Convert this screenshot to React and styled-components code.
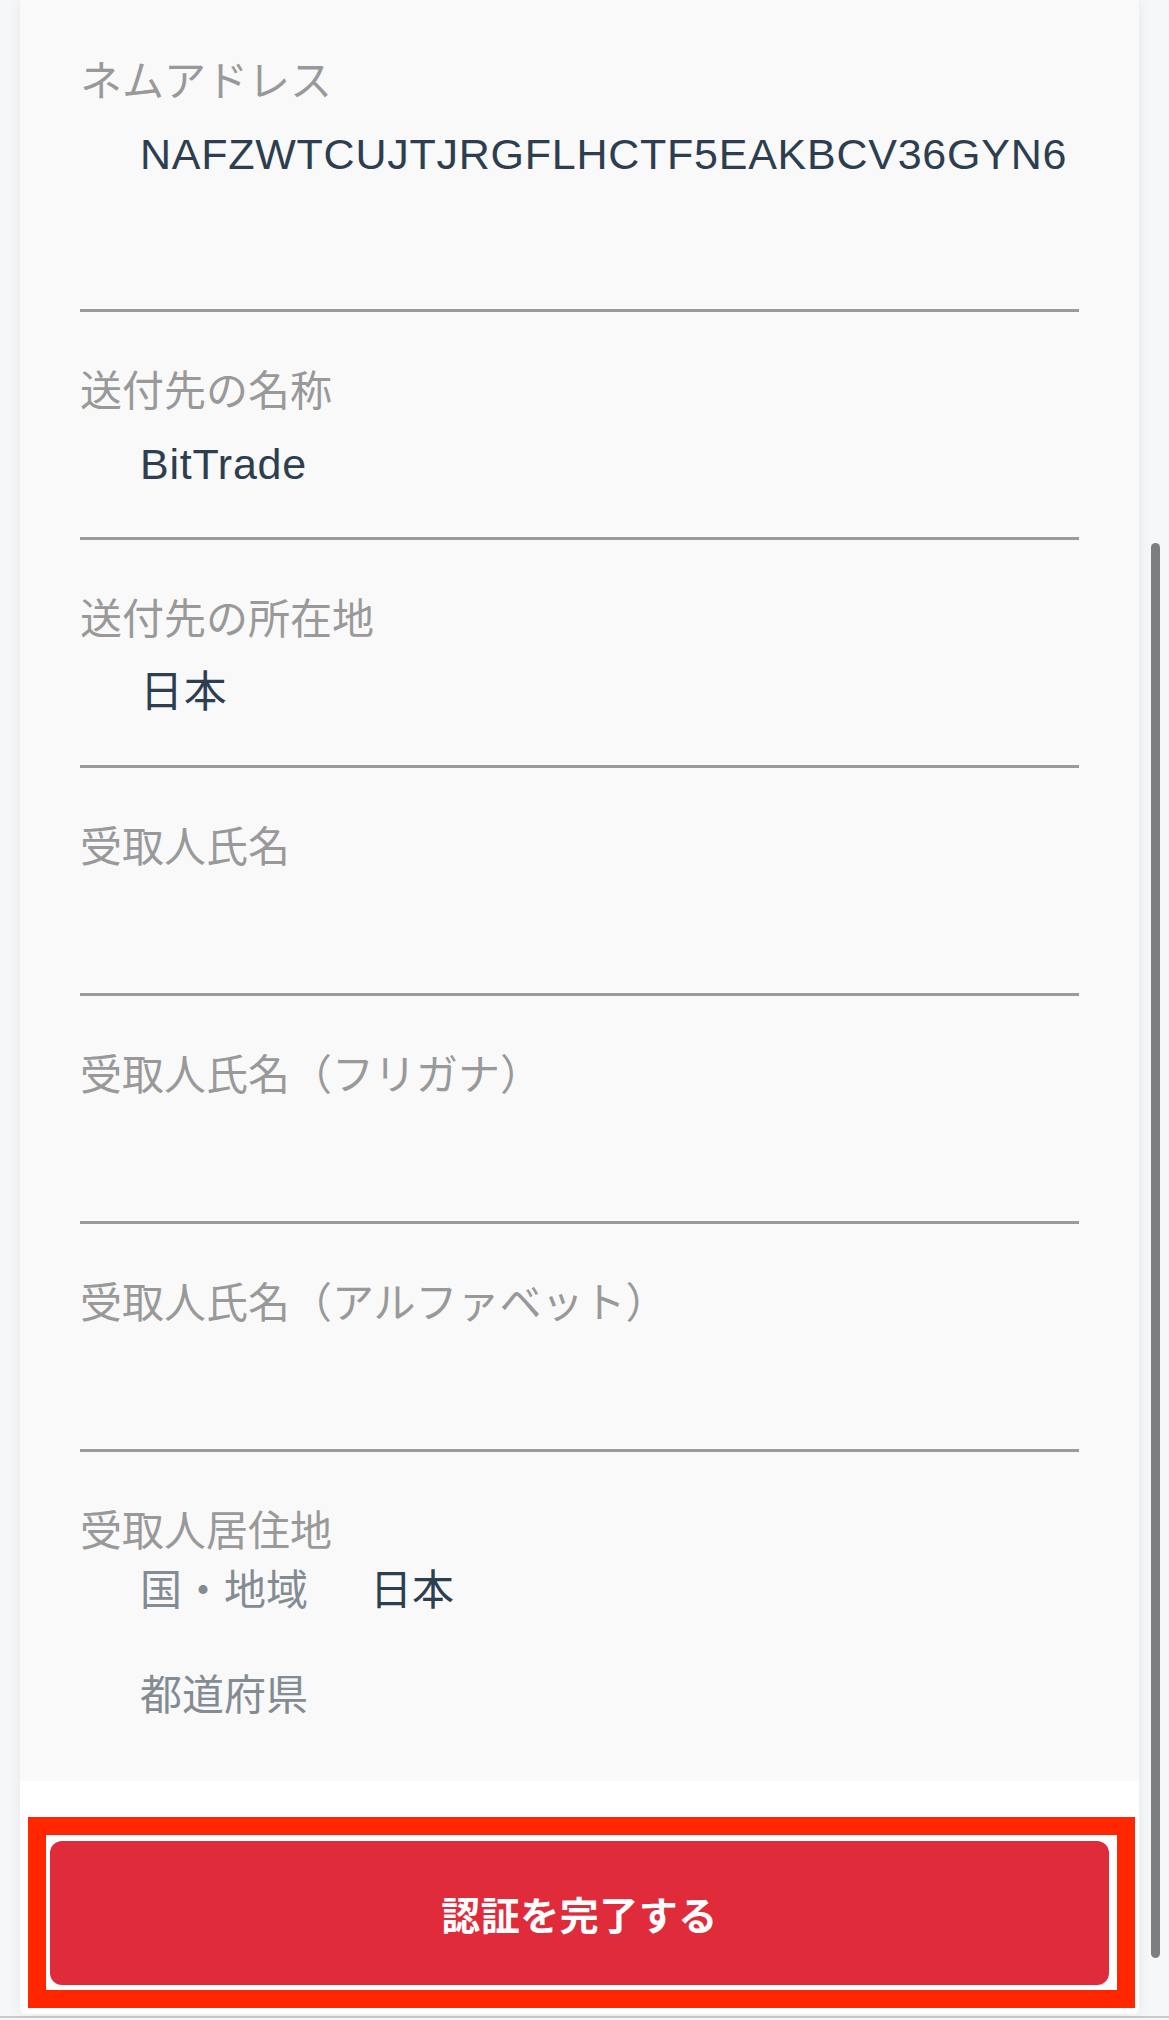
import React from "react";
import styled, { createGlobalStyle } from "styled-components";

const GlobalStyle = createGlobalStyle`
  html, body {
    margin: 0;
    padding: 0;
    background: #f6f7f9;
  }
  body {
    font-family: "Liberation Sans", "Noto Sans CJK JP", sans-serif;
    -webkit-font-smoothing: antialiased;
  }
`;

//form rows
const fields = [
  { label: "ネムアドレス", value: "NAFZWTCUJTJRGFLHCTF5EAKBCV36GYN6", tall: true },
  { label: "送付先の名称", value: "BitTrade" },
  { label: "送付先の所在地", value: "日本" },
  { label: "受取人氏名", value: "" },
  { label: "受取人氏名（フリガナ）", value: "" },
  { label: "受取人氏名（アルファベット）", value: "" },
];

const residence = [
  { name: "国・地域", value: "日本" },
  { name: "都道府県", value: "" },
];

const App = () => {
  return (
    <Page>
      <GlobalStyle />
      <Card>
        <FormArea>
          {fields.map((f, i) => (
            <Section key={f.label} first={i === 0}>
              <Label>{f.label}</Label>
              <Value tall={f.tall}>{f.value}</Value>
            </Section>
          ))}
          <Section last>
            <Label>受取人居住地</Label>
            <SubList>
              {residence.map((r) => (
                <SubRow key={r.name}>
                  <SubName>{r.name}</SubName>
                  <SubValue>{r.value}</SubValue>
                </SubRow>
              ))}
            </SubList>
          </Section>
        </FormArea>
        <Highlight>
          <SubmitButton type="button">認証を完了する</SubmitButton>
        </Highlight>
      </Card>
      <ScrollThumb />
    </Page>
  );
};

const Page = styled.div`
  position: relative;
  padding: 0 30px 0 20px;
  border-bottom: 2px solid #c9cacd;
  min-height: 2018px;
  box-sizing: border-box;
`;

const Card = styled.div`
  background: #ffffff;
  border-radius: 0 0 6px 6px;
  box-shadow: 0 0 14px rgba(0, 0, 0, 0.07);
  display: flex;
  flex-direction: column;
  padding-bottom: 6px;
`;

const FormArea = styled.div`
  background: #f9f9f9;
  padding: 0 60px 68px;
`;

const Section = styled.div`
  padding: ${(p) => (p.first ? "46px" : "44px")} 0 ${(p) => (p.last ? "0" : "41px")};
  border-bottom: ${(p) => (p.last ? "none" : "3px solid #9a9a9a")};
`;

const Label = styled.div`
  color: #999999;
  font-family: "Noto Sans CJK JP", sans-serif;
  font-size: 42px;
  line-height: 63px;
  white-space: nowrap;
`;

const Value = styled.div`
  margin-top: 14px;
  padding-left: 60px;
  min-height: ${(p) => (p.tall ? "145px" : "63px")};
  color: #2c3e50;
  font-family: "Liberation Sans", "Noto Sans CJK JP", sans-serif;
  font-size: 43px;
  letter-spacing: 0.75px;
  line-height: 63px;
  white-space: nowrap;
`;

const SubList = styled.div`
  display: flex;
  flex-direction: column;
  gap: 63px;
  margin-top: 7px;
  padding-left: 60px;
`;

const SubRow = styled.div`
  display: grid;
  grid-template-columns: 230px 1fr;
  font-family: "Noto Sans CJK JP", sans-serif;
  font-size: 42px;
  line-height: 42px;
`;

const SubName = styled.span`
  color: #838b93;
`;

const SubValue = styled.span`
  color: #2c3e50;
`;

const Highlight = styled.div`
  margin: 36px 4px 0 8px;
  border: 18px solid #ff2600;
  padding: 6px 8px 5px 4px;
  background: #ffffff;
`;

const SubmitButton = styled.button`
  display: flex;
  align-items: center;
  justify-content: center;
  width: 100%;
  height: 144px;
  border: none;
  border-radius: 12px;
  background: #e02b3a;
  color: #ffffff;
  font-family: "Noto Sans CJK JP", sans-serif;
  font-size: 39px;
  font-weight: 700;
  letter-spacing: 0.5px;
  cursor: pointer;
`;

const ScrollThumb = styled.div`
  position: absolute;
  top: 543px;
  right: 9px;
  width: 9px;
  height: 1415px;
  border-radius: 5px;
  background: #7d7e80;
`;

export default App;
